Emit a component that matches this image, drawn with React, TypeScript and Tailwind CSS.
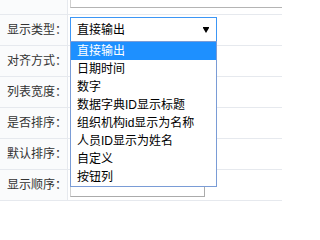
import React from "react"

const options = ["直接输出", "日期时间", "数字", "数据字典ID显示标题", "组织机构id显示为名称", "人员ID显示为姓名", "自定义", "按钮列"]

function Label({ text }: { text: string }) {
  return (
    <div className="w-[68px] shrink-0 border-r border-[#e6e9ee] bg-[#fafbfc] pl-[7px] flex items-center text-[12px] text-[#333]">
      {text}
    </div>
  )
}

export default function App() {
  return (
    <div className="w-[282px] h-[210px] overflow-hidden bg-white font-['Liberation_Sans','Noto_Sans_CJK_SC',sans-serif] text-[12px]">
      {/* partial row above */}
      <div className="flex h-[15px] border-b border-[#e6e9ee]">
        <div className="w-[68px] shrink-0 border-r border-[#e6e9ee] bg-[#fafbfc]" />
        <div className="pl-[2px]">
          <div className="w-[260px] h-[8px] border-x border-b border-[#b4b4b4] border-l-[#d0d0d0]" />
        </div>
      </div>

      <div className="flex h-[31px] border-b border-[#e6e9ee]">
        <Label text="显示类型：" />
        <div className="pl-[2px] pt-[2px]">
          <div className="relative z-10 w-[147px] h-[25px] border border-[#3c96f5] flex items-center pl-[6px] text-black">
            直接输出
            <svg className="absolute right-[7px] top-[9px]" width="6" height="6" viewBox="0 0 6 6">
              <polygon points="0,0 6,0 6,1 3,6 0,1" fill="#000" />
            </svg>
            <div className="absolute left-[-1px] top-[23px] w-[147px] border border-[#7a9cd6] bg-white">
              {options.map((o, i) => (
                <div
                  key={o}
                  className={
                    i === 0
                      ? "h-[18px] leading-[18px] pl-[6px] bg-[#1e90ff] text-white whitespace-nowrap"
                      : "h-[18px] leading-[18px] pl-[6px] text-black whitespace-nowrap"
                  }
                >
                  {o}
                </div>
              ))}
            </div>
          </div>
        </div>
      </div>

      {["对齐方式：", "列表宽度：", "是否排序：", "默认排序："].map((t) => (
        <div key={t} className="flex h-[31px] border-b border-[#e6e9ee]">
          <Label text={t} />
          <div className="flex-1" />
        </div>
      ))}

      <div className="flex h-[31px] border-b border-[#e6e9ee]">
        <Label text="显示顺序：" />
        <div className="pl-[2px] pt-[2px]">
          <div className="w-[135px] h-[25px] border border-[#d0d0d0] border-b-[#ababab] border-r-[#ababab]" />
        </div>
      </div>
    </div>
  )
}
